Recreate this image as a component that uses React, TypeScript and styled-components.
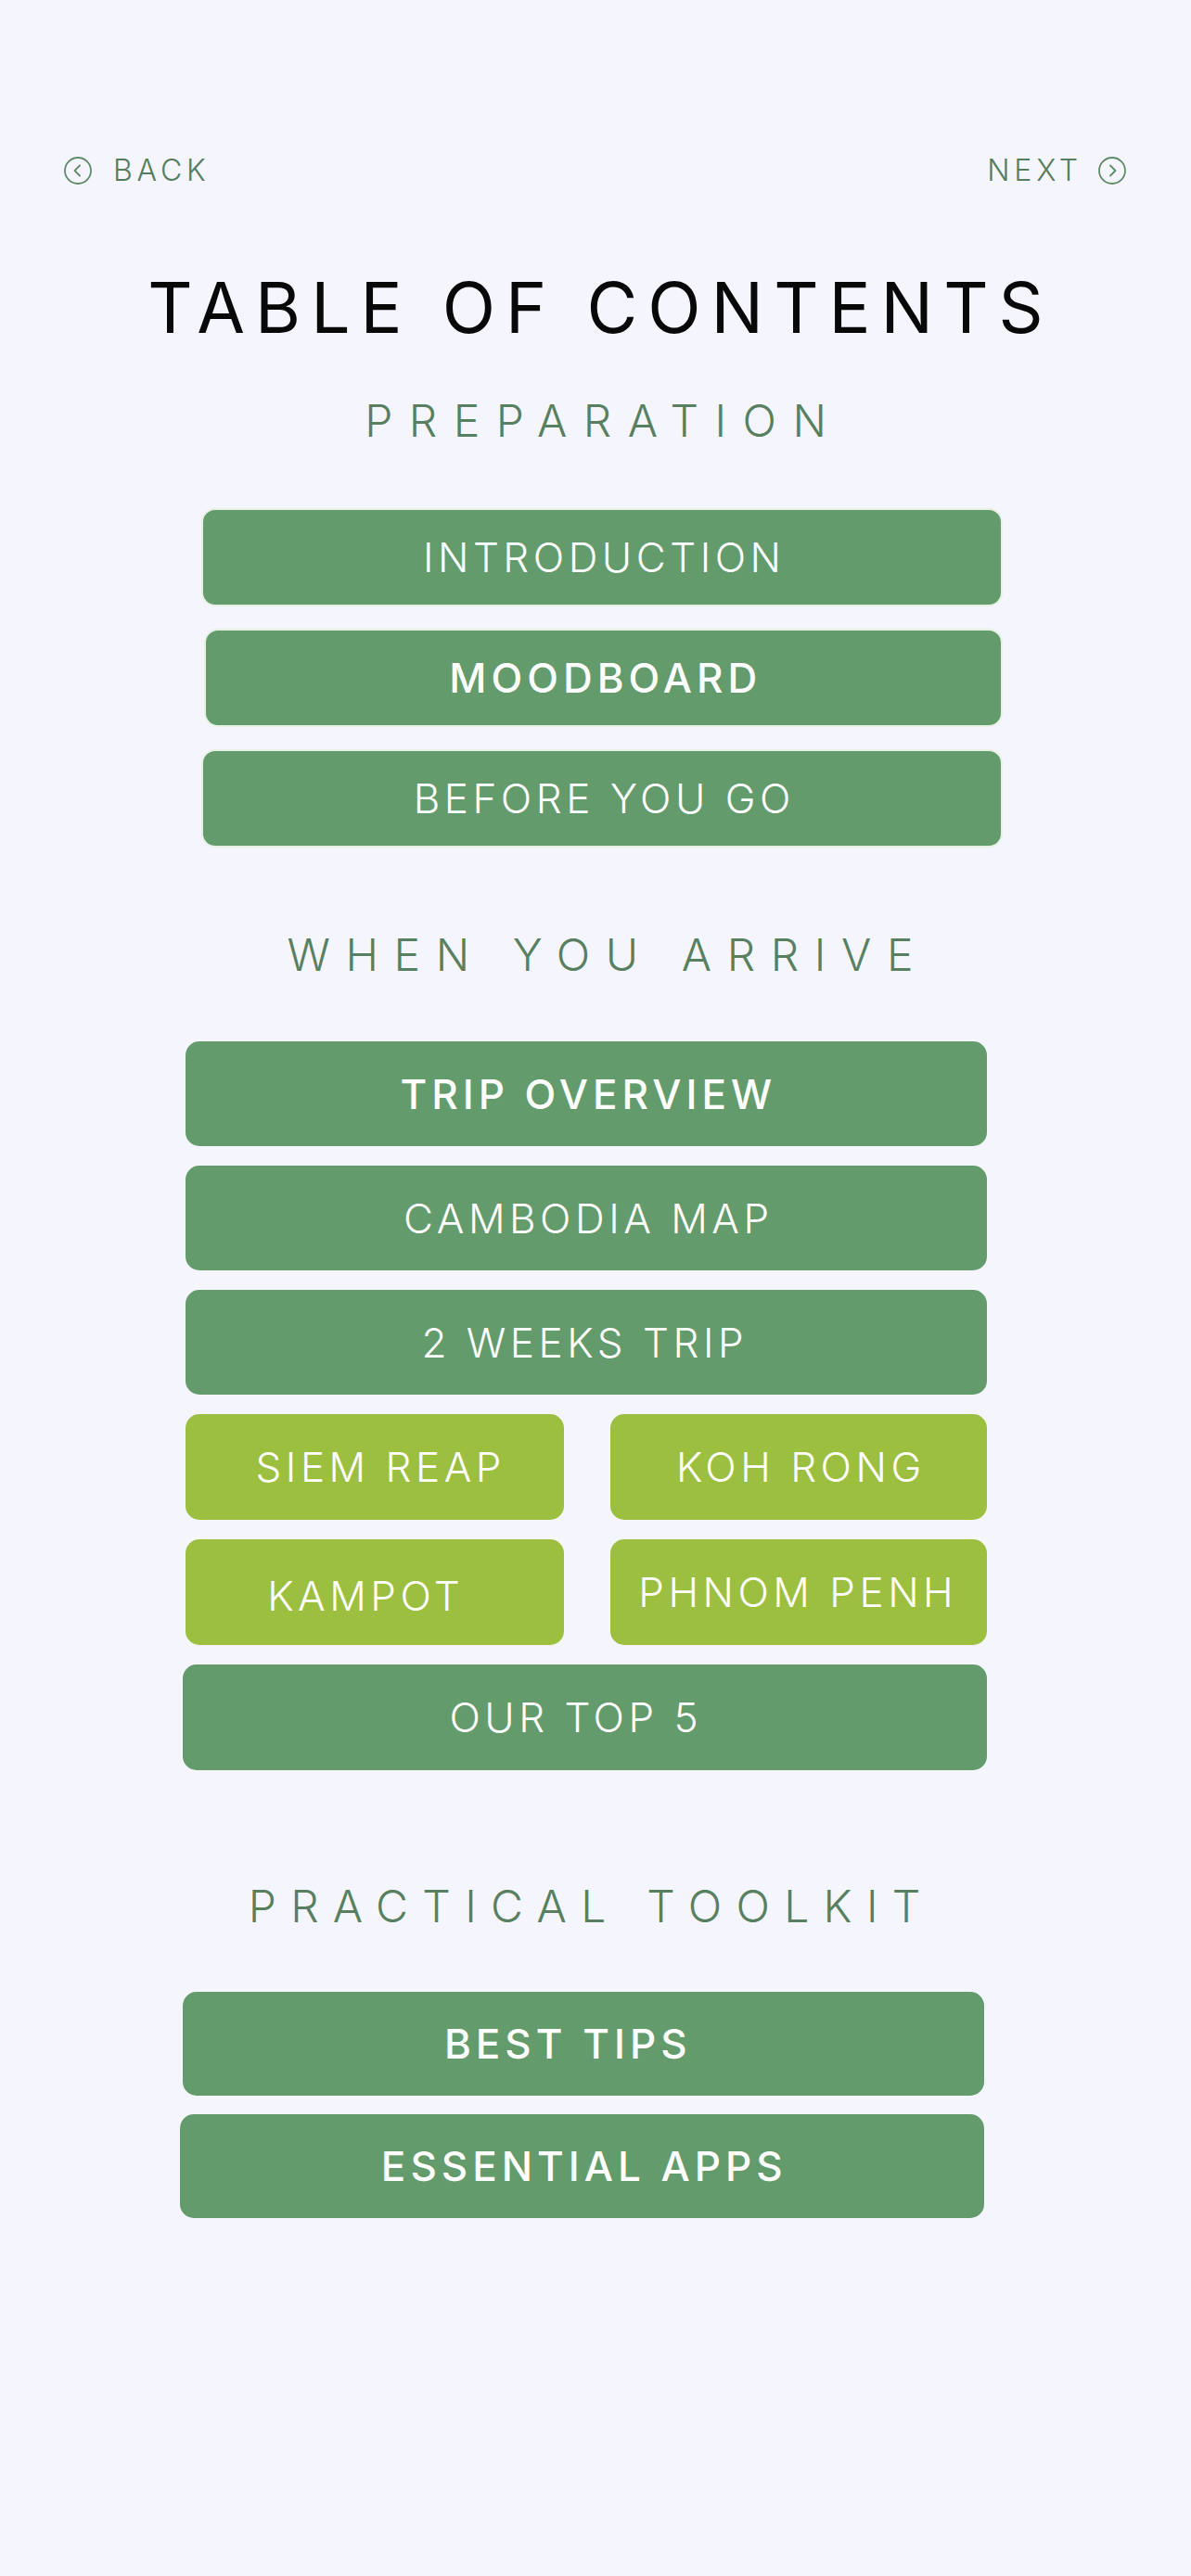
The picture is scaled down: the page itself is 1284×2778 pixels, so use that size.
import styled, { createGlobalStyle } from "styled-components";

const GlobalStyle = createGlobalStyle`
    html, body {
        margin: 0;
        padding: 0;
        background: #f5f6fd;
    }
    body {
        font-family: Inter, "Open Sans", sans-serif;
    }
`;

const Page = styled.div`
    width: 1284px;
    min-height: 2778px;
    padding-top: 164px;
    box-sizing: border-box;
    display: flex;
    flex-direction: column;
    background: #f5f6fd;
`;

const NavBar = styled.nav`
    display: flex;
    justify-content: space-between;
    align-items: center;
    padding: 0 69px 0 68px;
    height: 40px;
`;

const NavLink = styled.a<{ $gap: number }>`
    display: flex;
    align-items: center;
    gap: ${(p) => p.$gap}px;
    color: #557d5d;
    font-size: 32px;
    line-height: 40px;
    font-weight: 300;
    letter-spacing: 4.8px;
    text-decoration: none;
`;

const Title = styled.h1`
    margin: 88px 0 0;
    text-align: center;
    font-size: 75px;
    line-height: 80px;
    font-weight: 400;
    letter-spacing: 11px;
    padding-left: 11px;
    color: #080808;
`;

const SectionTitle = styled.h2<{ $top: number; $spacing: number; $shift?: number }>`
    margin: ${(p) => p.$top}px 0 0;
    text-align: center;
    font-size: 48px;
    line-height: 56px;
    font-weight: 300;
    letter-spacing: ${(p) => p.$spacing}px;
    padding-left: ${(p) => Math.max(0, p.$spacing + (p.$shift ?? 0) * 2)}px;
    padding-right: ${(p) => Math.max(0, -(p.$spacing + (p.$shift ?? 0) * 2))}px;
    color: #588060;
`;

const List = styled.div<{ $top: number; $left: number; $gap: number }>`
    margin: ${(p) => p.$top}px 0 0 ${(p) => p.$left}px;
    width: 864px;
    display: flex;
    flex-direction: column;
    gap: ${(p) => p.$gap}px;
`;

const Pair = styled.div`
    display: grid;
    grid-template-columns: 408px 406px;
    column-gap: 50px;
`;

const Button = styled.a<{
    $h: number;
    $bold?: boolean;
    $lime?: boolean;
    $outlined?: boolean;
    $shift?: number;
    $dx?: number;
    $dy?: number;
}>`
    box-sizing: border-box;
    height: ${(p) => p.$h}px;
    margin-left: ${(p) => p.$shift ?? 0}px;
    padding-left: ${(p) => 4.5 + Math.max(0, (p.$dx ?? 0) * 2)}px;
    padding-right: ${(p) => Math.max(0, -(p.$dx ?? 0) * 2)}px;
    padding-top: ${(p) => (p.$dy ?? 0) * 2}px;
    display: flex;
    align-items: center;
    justify-content: center;
    border-radius: 15px;
    background: ${(p) => (p.$lime ? "#9dbf40" : "#639b6c")};
    border: ${(p) => (p.$outlined ? "2px solid #e6f1e4" : "none")};
    color: #ffffff;
    font-size: 44px;
    line-height: 1;
    font-weight: ${(p) => (p.$bold ? 500 : 300)};
    letter-spacing: ${(p) => (p.$bold ? 5 : 4.5)}px;
    text-decoration: none;
`;

const Circle = ({ dir }: { dir: "left" | "right" }) => (
    <svg width="32" height="32" viewBox="0 0 32 32" fill="none">
        <circle cx="16" cy="16" r="14" stroke="#5f8c67" strokeWidth="1.8" />
        <path
            d={dir === "left" ? "M18 10.5 L12.5 16 L18 21.5" : "M14 10.5 L19.5 16 L14 21.5"}
            stroke="#5f8c67"
            strokeWidth="1.8"
            strokeLinecap="round"
            strokeLinejoin="round"
        />
    </svg>
);

export default function App() {
    return (
        <Page>
            <GlobalStyle />
            <NavBar>
                <NavLink $gap={22}>
                    <Circle dir="left" />
                    BACK
                </NavLink>
                <NavLink $gap={16}>
                    NEXT
                    <Circle dir="right" />
                </NavLink>
            </NavBar>

            <Title>TABLE OF CONTENTS</Title>

            <SectionTitle $top={54} $spacing={17.5}>PREPARATION</SectionTitle>
            <List $top={66} $left={217} $gap={24}>
                <Button $h={106} $outlined>INTRODUCTION</Button>
                <Button $h={106} $outlined $bold $shift={3}>MOODBOARD</Button>
                <Button $h={106} $outlined>BEFORE YOU GO</Button>
            </List>

            <SectionTitle $top={88} $spacing={16.6} $shift={5}>WHEN YOU ARRIVE</SectionTitle>
            <List $top={65} $left={200} $gap={21}>
                <Button $h={113} $bold>TRIP OVERVIEW</Button>
                <Button $h={113}>CAMBODIA MAP</Button>
                <Button $h={113} $dx={-4}>2 WEEKS TRIP</Button>
                <Pair>
                    <Button $h={114} $lime $dx={4}>SIEM REAP</Button>
                    <Button $h={114} $lime>KOH RONG</Button>
                </Pair>
                <Pair>
                    <Button $h={114} $lime $dx={-12} $dy={4}>KAMPOT</Button>
                    <Button $h={114} $lime $dx={-3}>PHNOM PENH</Button>
                </Pair>
                <Button $h={114} $shift={-3} $dx={-12}>OUR TOP 5</Button>
            </List>

            <SectionTitle $top={119} $spacing={15.3} $shift={-12}>PRACTICAL TOOLKIT</SectionTitle>
            <List $top={64} $left={197} $gap={20}>
                <Button $h={112} $bold $dx={-19}>BEST TIPS</Button>
                <Button $h={112} $bold $shift={-3}>ESSENTIAL APPS</Button>
            </List>
        </Page>
    );
}
